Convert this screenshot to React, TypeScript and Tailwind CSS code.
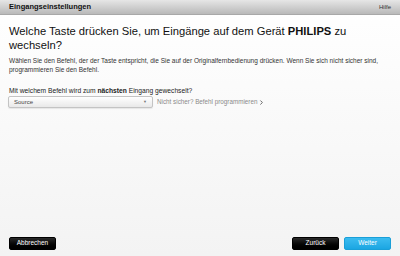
import { ChevronRight } from 'lucide-react';

const font = { fontFamily: '"Liberation Sans", Arial, sans-serif' };

const Btn = ({ label, tone }: { label: string; tone: 'dark' | 'blue' }) => (
  <button
    className={`h-[13px] w-[47px] rounded-[2px] text-[6.5px] leading-none text-white ${
      tone === 'dark'
        ? 'bg-gradient-to-b from-[#2a2a2a] to-[#000] border border-[#000]'
        : 'bg-gradient-to-b from-[#3bbcf0] to-[#1aa6e2] border border-[#1a9fd8]'
    }`}
  >
    {label}
  </button>
);

export default function App() {
  return (
    <div
      className="w-[400px] h-[256px] flex flex-col bg-gradient-to-b from-[#ffffff] to-[#f3f3f3] text-[#222]"
      style={font}
    >
      {/* Header bar */}
      <div className="h-[15px] flex items-center justify-between px-[9px] bg-gradient-to-b from-[#e6e6e6] to-[#b9b9b9] border-b border-[#a8a8a8]">
        <span className="text-[7.5px] font-bold text-[#111]">Eingangseinstellungen</span>
        <span className="text-[6px] text-[#333]">Hilfe</span>
      </div>

      <div className="flex-1 flex flex-col px-[9px]">
        <h1 className="mt-[9px] w-[345px] text-[11.2px] leading-[14px] text-[#111]">
          Welche Taste drücken Sie, um Eingänge auf dem Gerät <b>PHILIPS</b> zu wechseln?
        </h1>
        <p className="mt-[4px] text-[6.5px] leading-[9px] text-[#333]">
          Wählen Sie den Befehl, der der Taste entspricht, die Sie auf der Originalfernbedienung
          drücken. Wenn Sie sich nicht sicher sind, programmieren Sie den Befehl.
        </p>

        <p className="mt-[12px] text-[6.7px] leading-[9px] text-[#222]">
          Mit welchem Befehl wird zum <b>nächsten</b> Eingang gewechselt?
        </p>
        <div className="mt-[1px] flex items-center gap-[4px]">
          <div className="ml-[-1px] w-[145px] h-[12px] flex items-center justify-between px-[5px] rounded-[2px] border border-[#c4c4c4] bg-gradient-to-b from-[#ffffff] to-[#e9e9e9] shadow-[0_1px_1px_rgba(0,0,0,0.08)]">
            <span className="text-[6px] text-[#444]">Source</span>
            <span className="text-[4px] text-[#777]">▼</span>
          </div>
          <span className="flex items-center text-[6.3px] text-[#8a8a8a]">
            Nicht sicher? Befehl programmieren
            <ChevronRight className="w-[7px] h-[7px] ml-[1px] text-[#555]" strokeWidth={3} />
          </span>
        </div>

        <div className="mt-auto mb-[6px] flex items-center">
          <Btn label="Abbrechen" tone="dark" />
          <div className="flex-1" />
          <Btn label="Zurück" tone="dark" />
          <div className="w-[5px]" />
          <Btn label="Weiter" tone="blue" />
        </div>
      </div>
    </div>
  );
}
